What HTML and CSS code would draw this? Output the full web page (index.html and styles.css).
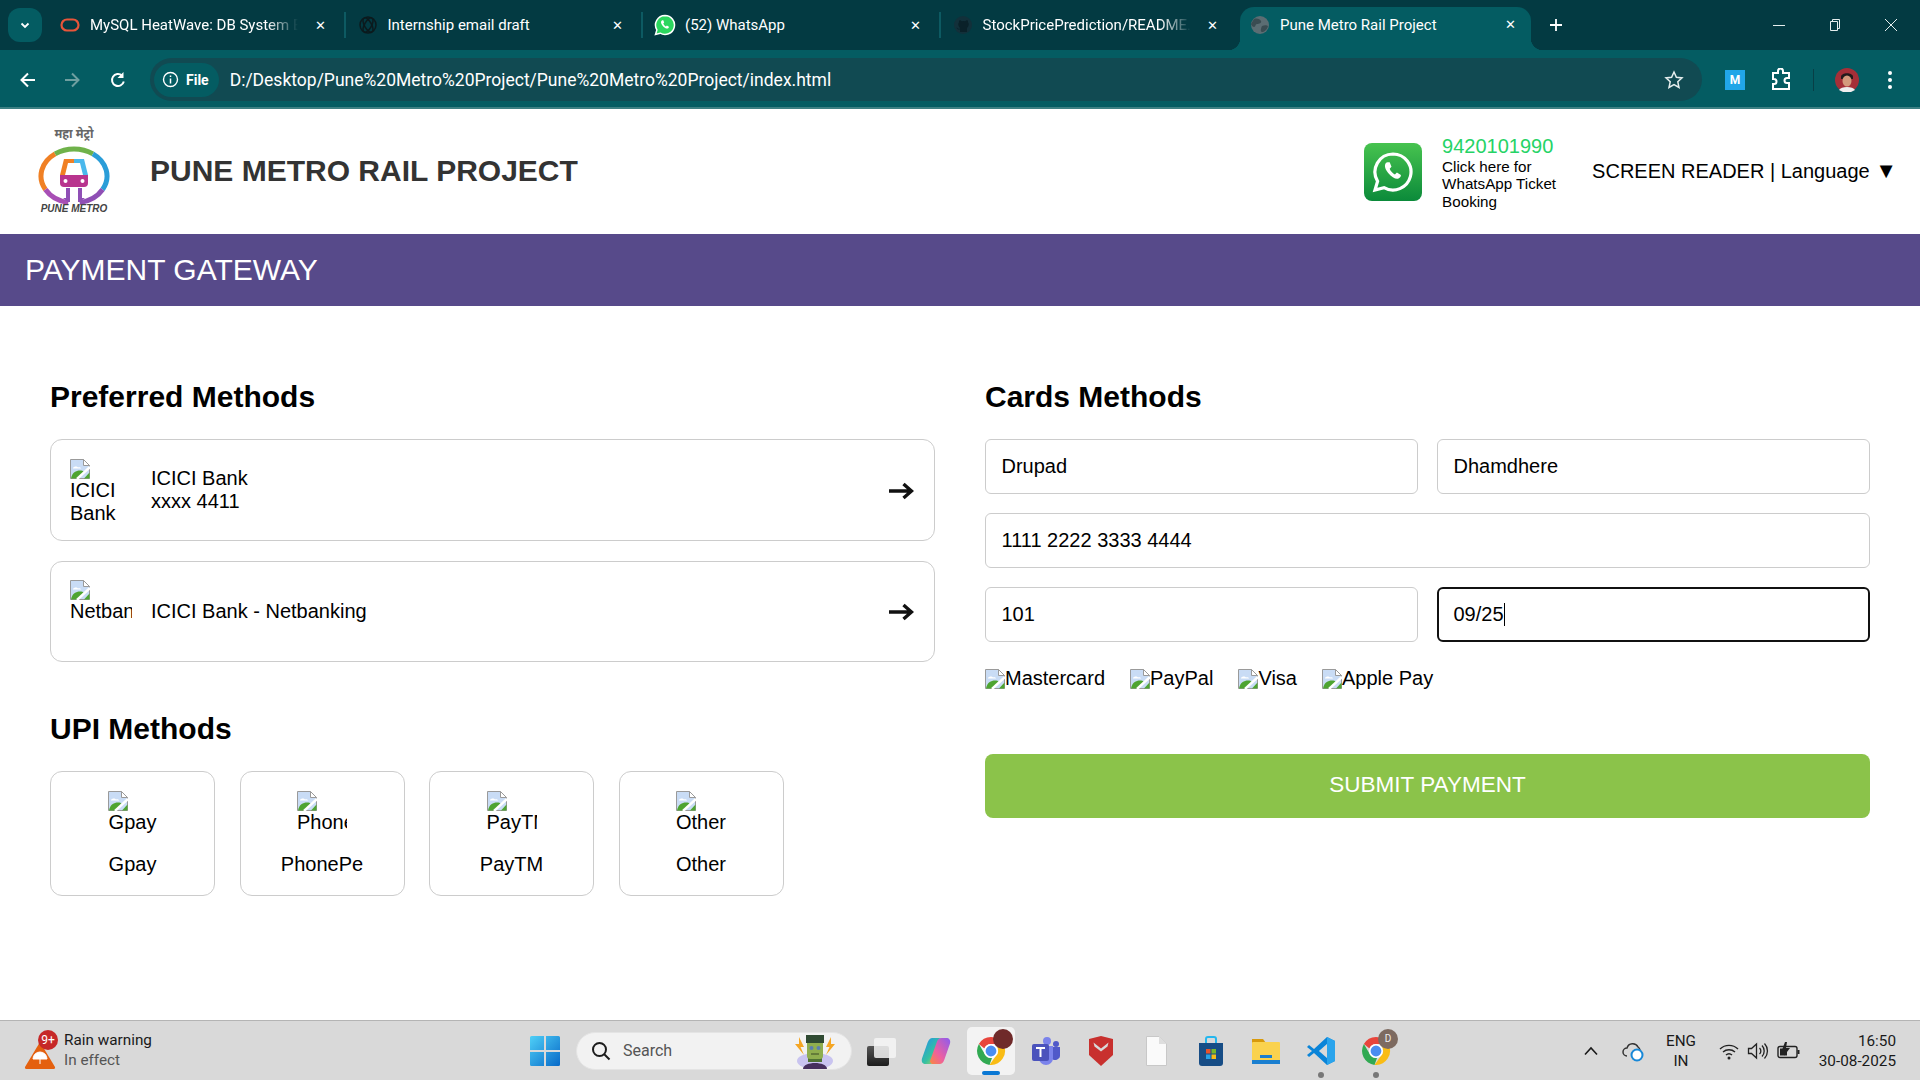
FILE: index.html
```html
<!DOCTYPE html>
<html lang="en">
<head>
<meta charset="utf-8">
<title>Pune Metro Rail Project</title>
<link rel="stylesheet" href="styles.css">
</head>
<body>
<svg class="defs" width="0" height="0" aria-hidden="true">
  <defs>
    <symbol id="broken" viewBox="0 0 20 20">
      <path d="M.5.5H13.5L19.5 6.5V19.5H.5Z" fill="#c9dcf5" stroke="#9a9a9a"/>
      <path d="M13.5.5V6.5H19.5Z" fill="#fff" stroke="#9a9a9a"/>
      <path d="M3 9c1-2 4-2 5-.5 1-.5 3 0 3 1H3Z" fill="#fff"/>
      <path d="M1 19.5c1-6 5-8 9-8 2 0 3 .5 4 1l-6 7Z" fill="#4ea431"/>
      <path d="M19.5 13.5V19.5H14Z" fill="#4ea431"/>
      <path d="M7 20 20 8" stroke="#fff" stroke-width="2.4"/>
    </symbol>
    <symbol id="chrome" viewBox="0 0 32 32">
      <path d="M16 2a14 14 0 0 1 12.1 7H16a7 7 0 0 0-6.6 4.6L3.9 9A14 14 0 0 1 16 2Z" fill="#e8453c"/>
      <path d="M28.1 9A14 14 0 0 1 14.500 29.900L20.600 21.200A7 7 0 0 0 22 12L28.100 9Z" fill="#f9bc15"/>
      <path d="M3.900 9L10 19.500A7 7 0 0 0 17 23L14.500 29.900A14 14 0 0 1 3.900 9Z" fill="#31a952"/>
      <circle cx="16" cy="16" r="6.200" fill="#4a8df0" stroke="#fff" stroke-width="1.600"/>
    </symbol>
    <symbol id="go" viewBox="0 0 26 18">
      <path d="M1 9H23M15.500 2 23.500 9 15.500 16" fill="none" stroke="#111" stroke-width="3.400"/>
    </symbol>
  </defs>
</svg>

<div class="browser-tabs">
  <div class="tab-search"><svg width="12" height="12" viewBox="0 0 12 12"><path d="M2.500 4.500 6 8l3.500-3.500" fill="none" stroke="#fff" stroke-width="1.800"/></svg></div>
  <div class="tab">
    <svg class="favicon" width="20" height="20" viewBox="0 0 20 20"><rect x="1.500" y="4.500" width="17" height="11" rx="5.500" fill="none" stroke="#e8553a" stroke-width="2.200"/></svg>
    <span class="tab-title fade">MySQL HeatWave: DB System E</span><span class="tab-x">✕</span>
  </div>
  <div class="tab-sep"></div>
  <div class="tab">
    <svg class="favicon" width="20" height="20" viewBox="0 0 20 20"><g fill="none" stroke="#0c1a1d" stroke-width="1.500"><circle cx="10" cy="10" r="8"/><ellipse cx="10" cy="10" rx="8" ry="3.500" transform="rotate(60 10 10)"/><ellipse cx="10" cy="10" rx="8" ry="3.500" transform="rotate(-60 10 10)"/></g></svg>
    <span class="tab-title">Internship email draft</span><span class="tab-x">✕</span>
  </div>
  <div class="tab-sep"></div>
  <div class="tab">
    <svg class="favicon favicon-wide" width="22" height="22" viewBox="0 0 22 22"><path d="M11 1.500a9.500 9.500 0 0 0-8.100 14.400L1.500 20.500l4.700-1.300A9.500 9.500 0 1 0 11 1.500Z" fill="#2bd65e" stroke="#fff" stroke-width="1.500"/><path d="M7.800 6.500c-1.300 1-1 3 .8 5.200 1.800 2.200 3.900 3.200 5.100 2.700.8-.3 1.300-1.200 1.200-1.700l-2-1.200-1 .9c-1-.4-2.300-1.900-2.600-2.900l.9-1-.9-2.200c-.5-.1-1.100-.1-1.500.2Z" fill="#fff"/></svg>
    <span class="tab-title">(52) WhatsApp</span><span class="tab-x">✕</span>
  </div>
  <div class="tab-sep"></div>
  <div class="tab">
    <svg class="favicon" width="20" height="20" viewBox="0 0 20 20"><circle cx="10" cy="10" r="9" fill="#12303a"/><path d="M7 17v-2.500c-2 .3-3-.6-3.500-2 1.500.8 2 1.600 3.500 1.200 0-1-.5-1.500-1-2 -1-1.500-1-3.500 0-4.500 0-1 0-1.500.5-2 1 0 1.800.5 2.300 1a6 6 0 0 1 3.400 0c.5-.5 1.300-1 2.300-1 .5.500.5 1 .5 2 1 1 1 3 0 4.500-.5.500-1 1-1 2V17Z" fill="#0a2129"/></svg>
    <span class="tab-title fade">StockPricePrediction/README.md</span><span class="tab-x">✕</span>
  </div>
  <div class="tab tab-active">
    <svg class="favicon" width="20" height="20" viewBox="0 0 20 20"><circle cx="10" cy="10" r="9" fill="#5b6d73"/><path d="M4 4c3-1 6 0 7 2s-2 3-4 3 -1 3-3 3-3-3-3-3ZM12 11c2-1 5-1 6 0-1 4-4 6-6 6s-1-4 0-6Z" fill="#3a4c52"/></svg>
    <span class="tab-title">Pune Metro Rail Project</span><span class="tab-x">✕</span>
  </div>
  <div class="tab-plus">
    <svg width="14" height="14" viewBox="0 0 14 14"><path d="M7 1v12M1 7h12" stroke="#fff" stroke-width="1.800"/></svg>
  </div>
  <div class="win-controls">
    <svg width="14" height="14" viewBox="0 0 14 14"><path d="M1 7.500h12" stroke="#e5eeee"/></svg>
    <svg width="14" height="14" viewBox="0 0 14 14"><path d="M2.500 3.500h7v9h-7ZM4.500 3.500V1.500h7v9h-2" fill="none" stroke="#e5eeee"/></svg>
    <svg width="14" height="14" viewBox="0 0 14 14"><path d="M1 1l12 12M13 1 1 13" stroke="#e5eeee"/></svg>
  </div>
</div>

<div class="browser-toolbar">
  <svg class="nav" width="20" height="20" viewBox="0 0 20 20"><path d="M17 10H4M10 3.500 3.500 10l6.500 6.500" fill="none" stroke="#fff" stroke-width="2"/></svg>
  <svg class="nav" width="20" height="20" viewBox="0 0 20 20"><path d="M3 10h13M10 3.500l6.500 6.500-6.500 6.500" fill="none" stroke="#6f9fa0" stroke-width="2"/></svg>
  <svg class="nav nav-reload" width="20" height="20" viewBox="0 0 20 20"><path d="M15.800 11.500A6 6 0 1 1 14 5.500" fill="none" stroke="#fff" stroke-width="2"/><path d="M15.500 2v6h-6Z" fill="#fff"/></svg>
  <div class="omnibox">
    <div class="chip">
      <svg width="17" height="17" viewBox="0 0 17 17"><circle cx="8.500" cy="8.500" r="7" fill="none" stroke="#fff" stroke-width="1.400"/><path d="M8.500 7.500v5M8.500 4.500v1.500" stroke="#fff" stroke-width="1.500"/></svg>
      <span>File</span>
    </div>
    <span class="url">D:/Desktop/Pune%20Metro%20Project/Pune%20Metro%20Project/index.html</span>
    <svg class="star" width="20" height="20" viewBox="0 0 20 20"><path d="M10 2l2.400 5.300 5.600.6-4.200 3.900 1.200 5.700-5-2.900-5 2.900 1.200-5.700L2 7.900l5.600-.6Z" fill="none" stroke="#e6eeee" stroke-width="1.500"/></svg>
  </div>
  <div class="ext-m">M</div>
  <svg class="ext-puzzle" width="22" height="24" viewBox="0 0 22 24"><path d="M2 5h5V3a2.500 2.500 0 0 1 5 0v2h6v5h-2a2.500 2.500 0 0 0 0 5h2v6H2v-5h1a2.500 2.500 0 0 0 0-5H2Z" fill="none" stroke="#fff" stroke-width="2"/></svg>
  <div class="tool-sep"></div>
  <svg class="avatar" width="24" height="24" viewBox="0 0 24 24"><circle cx="12" cy="12" r="12" fill="#a52f38"/><path d="M6 9c0-5 12-5 12 0v2H6Z" fill="#221a1c"/><ellipse cx="12" cy="13" rx="4.500" ry="5.500" fill="#d49a7c"/><path d="M4 22c2-4 14-4 16 0l-4 2H8Z" fill="#f0eeee"/></svg>
  <svg class="menu" width="6" height="20" viewBox="0 0 6 20"><circle cx="3" cy="3" r="2" fill="#fff"/><circle cx="3" cy="10" r="2" fill="#fff"/><circle cx="3" cy="17" r="2" fill="#fff"/></svg>
</div>

<main class="page">
  <header class="site-header">
    <div class="logo">
      <span class="logo-hindi">महा मेट्रो</span>
      <svg class="logo-mark" width="72" height="60" viewBox="0 0 72 60">
        <g fill="none" stroke-width="5">
          <path d="M7.400 43.500A33 27 0 0 1 17.100 7.900" stroke="#f08024"/>
          <path d="M17.100 7.900A33 27 0 0 1 54.900 7.900" stroke="#6fb24a"/>
          <path d="M54.900 7.900A33 27 0 0 1 64.600 43.500" stroke="#2a9dd8"/>
          <path d="M64.600 43.500A33 27 0 0 1 41.700 56.600" stroke="#8f4fb5"/>
          <path d="M30.300 56.600A33 27 0 0 1 7.400 43.500" stroke="#a84fb5"/>
        </g>
        <path d="M26 13h10v4h-6l-3 12h-5Z" fill="#f08024"/>
        <path d="M36 13h10l4 16h-5l-3-12h-6Z" fill="#4ab8ec"/>
        <path d="M22 29h28v8a4 4 0 0 1-4 4H26a4 4 0 0 1-4-4Z" fill="#b8348e"/>
        <circle cx="27.500" cy="35" r="2" fill="#fff"/><circle cx="44.500" cy="35" r="2" fill="#fff"/>
        <path d="M28 42h4v14h-2l-5-4h3ZM40 42h4v10h3l-5 4h-2Z" fill="#8f4fb5"/>
      </svg>
      <span class="logo-en">PUNE METRO</span>
    </div>
    <h1 class="site-title">PUNE METRO RAIL PROJECT</h1>
    <div class="wa-icon">
      <svg width="44" height="44" viewBox="0 0 44 44"><path d="M22 4a18 18 0 0 0-15.400 27.300L4 40l9-2.400A18 18 0 1 0 22 4Z" fill="none" stroke="#fff" stroke-width="3.200"/><path d="M15.500 12.500c-2.500 2-2 6 1.700 10.500 3.700 4.500 7.800 6.500 10.300 5.500 1.600-.7 2.600-2.400 2.400-3.500l-4-2.400-2 1.900c-2-.8-4.600-3.800-5.200-5.800l1.800-2-1.800-4.400c-1-.2-2.200-.2-3 .2Z" fill="#fff"/></svg>
    </div>
    <div class="wa-text">
      <div class="wa-number">9420101990</div>
      <div class="wa-desc">Click here for<br>WhatsApp Ticket<br>Booking</div>
    </div>
    <div class="reader">SCREEN READER | Language <span class="reader-arrow">▼</span></div>
  </header>

  <div class="banner">PAYMENT GATEWAY</div>

  <div class="pay-grid">
    <section class="pay-col">
      <h2 class="section-title">Preferred Methods</h2>
      <div class="method-card">
        <div class="alt-img"><svg class="broken"><use href="#broken"/></svg>ICICI Bank</div>
        <div class="method-text">ICICI Bank<br>xxxx 4411</div>
        <svg class="arrow"><use href="#go"/></svg>
      </div>
      <div class="method-card">
        <div class="alt-img nowrap"><svg class="broken"><use href="#broken"/></svg>Netbanking</div>
        <div class="method-text">ICICI Bank - Netbanking</div>
        <svg class="arrow"><use href="#go"/></svg>
      </div>
      <h2 class="section-title upi-title">UPI Methods</h2>
      <div class="upi-row">
        <div class="upi-card"><div class="upi-img"><svg class="broken"><use href="#broken"/></svg>Gpay</div><div>Gpay</div></div>
        <div class="upi-card"><div class="upi-img"><svg class="broken"><use href="#broken"/></svg>PhonePe</div><div>PhonePe</div></div>
        <div class="upi-card"><div class="upi-img"><svg class="broken"><use href="#broken"/></svg>PayTM</div><div>PayTM</div></div>
        <div class="upi-card"><div class="upi-img"><svg class="broken"><use href="#broken"/></svg>Other</div><div>Other</div></div>
      </div>
    </section>
    <section class="pay-col">
      <h2 class="section-title">Cards Methods</h2>
      <div class="form-grid">
        <div class="field">Drupad</div>
        <div class="field">Dhamdhere</div>
        <div class="field field-wide">1111 2222 3333 4444</div>
        <div class="field">101</div>
        <div class="field field-focus">09/25<span class="caret"></span></div>
      </div>
      <div class="brands">
        <span class="brand"><svg class="broken"><use href="#broken"/></svg>Mastercard</span>
        <span class="brand"><svg class="broken"><use href="#broken"/></svg>PayPal</span>
        <span class="brand"><svg class="broken"><use href="#broken"/></svg>Visa</span>
        <span class="brand"><svg class="broken"><use href="#broken"/></svg>Apple Pay</span>
      </div>
      <div class="submit">SUBMIT PAYMENT</div>
    </section>
  </div>
</main>

<footer class="taskbar">
  <div class="tb-left">
    <div class="weather">
      <svg width="32" height="30" viewBox="0 0 32 30"><path d="M16 2 31 27a1.500 1.500 0 0 1-1 2H2a1.500 1.500 0 0 1-1-2Z" fill="#e4600f"/><path d="M9 19a7 7 0 0 1 14 0ZM16 19v5" fill="#fff" stroke="#fff"/></svg>
      <span class="weather-badge">9+</span>
    </div>
    <div class="weather-text"><div>Rain warning</div><div class="muted">In effect</div></div>
  </div>
  <div class="tb-center">
    <svg class="winlogo" width="30" height="30" viewBox="0 0 30 30"><defs><linearGradient id="wg" x1="0" y1="0" x2="1" y2="1"><stop offset="0" stop-color="#4fd0f7"/><stop offset="1" stop-color="#0769c8"/></linearGradient></defs><path d="M0 1.500A1.500 1.500 0 0 1 1.500 0H14V14H0ZM16 0H28.500A1.500 1.500 0 0 1 30 1.500V14H16ZM0 16H14V30H1.500A1.500 1.500 0 0 1 0 28.500ZM16 16H30V28.500A1.500 1.500 0 0 1 28.500 30H16Z" fill="url(#wg)"/></svg>
    <div class="tb-search">
      <svg width="20" height="20" viewBox="0 0 20 20"><circle cx="8.500" cy="8.500" r="6.500" fill="none" stroke="#1c1c1c" stroke-width="2"/><path d="M13 13l5.500 5.500" stroke="#1c1c1c" stroke-width="2"/></svg>
      <span class="search-text">Search</span>
      <svg class="franken" width="50" height="36" viewBox="0 0 50 36"><ellipse cx="25" cy="28" rx="18" ry="8" fill="#c9c4f0"/><path d="M9 4l5 10-3.500 0 3.500 8-9-11h4ZM41 4l-5 10 3.500 0-3.500 8 9-11h-4Z" fill="#f5a623"/><path d="M13 36c0-8 24-8 24 0Z" fill="#46305e"/><rect x="18" y="23" width="14" height="6" fill="#4e7233"/><rect x="17" y="6" width="16" height="20" rx="3" fill="#8fae4e"/><rect x="16" y="2" width="18" height="8" fill="#2f4a32"/><circle cx="21.500" cy="15" r="2" fill="#5a7fb0"/><circle cx="28.500" cy="15" r="2" fill="#5a7fb0"/><path d="M21 21h8" stroke="#3a4a24"/></svg>
    </div>
    <div class="tb-icons">
      <div class="tb-app"><svg width="32" height="30" viewBox="0 0 32 30"><defs><linearGradient id="tv" x1="0" y1="0" x2="0" y2="1"><stop offset="0" stop-color="#555"/><stop offset="1" stop-color="#1d1d1d"/></linearGradient></defs><rect x="2" y="10" width="22" height="20" rx="2" fill="url(#tv)"/><rect x="9" y="2" width="22" height="20" rx="2" fill="#f4f4f4" fill-opacity=".85"/></svg></div>
      <div class="tb-app"><svg width="30" height="28" viewBox="0 0 32 30"><defs><linearGradient id="cp1" x1="0" y1="0" x2="1" y2="1"><stop offset="0" stop-color="#1f8ef0"/><stop offset=".55" stop-color="#35c1a0"/><stop offset="1" stop-color="#f9d23c"/></linearGradient><linearGradient id="cp2" x1="1" y1="0" x2="0" y2="1"><stop offset="0" stop-color="#8a5cf0"/><stop offset=".6" stop-color="#ee5fa0"/><stop offset="1" stop-color="#f98a3c"/></linearGradient></defs><path d="M12 1h7c2 0 3 1 3.500 3L15 25c-1 3-3 4-5 4H5c-3 0-5-2-4-6L7 6c1-3 3-5 5-5Z" fill="url(#cp1)"/><path d="M20 29h-7c-2 0-3-1-3.500-3L17 5c1-3 3-4 5-4h5c3 0 5 2 4 6l-6 17c-1 3-3 5-5 5Z" fill="url(#cp2)"/></svg></div>
      <div class="tb-app tb-active">
        <svg width="32" height="32"><use href="#chrome"/></svg>
        <span class="prof-badge"></span><span class="active-bar"></span>
      </div>
      <div class="tb-app"><svg width="32" height="30" viewBox="0 0 32 30"><circle cx="17" cy="5" r="4" fill="#7b83eb"/><circle cx="26" cy="8" r="3" fill="#5059c9"/><path d="M19 11h11v9a5 5 0 0 1-8 3Z" fill="#5059c9"/><path d="M9 10h14v12a7 7 0 0 1-14 0Z" fill="#7b83eb"/><rect x="2" y="8" width="17" height="17" rx="2" fill="#4b53bc"/><path d="M6 12h9M10.500 12v9" stroke="#fff" stroke-width="2"/></svg></div>
      <div class="tb-app"><svg width="26" height="30" viewBox="0 0 26 30"><path d="M1 3l12-3 12 3v16l-12 11L1 19Z" fill="#c8302e"/><path d="M5.500 6.500l7.500 6 7.500-6-1 4-6.500 5-6.500-5Z" fill="#d9d9d9"/></svg></div>
      <div class="tb-app"><svg width="24" height="30" viewBox="0 0 24 30"><path d="M2.500.5H15L22.500 8V29.500H2.500Z" fill="#fafafa" stroke="#c8c8c8"/><path d="M15 .5V8H22.500Z" fill="#dedede"/></svg></div>
      <div class="tb-app"><svg width="26" height="30" viewBox="0 0 26 30"><path d="M8 7V3a2 2 0 0 1 2-2h6a2 2 0 0 1 2 2v4" fill="none" stroke="#25b7ee" stroke-width="2"/><path d="M1 7h24v20a3 3 0 0 1-3 3H4a3 3 0 0 1-3-3Z" fill="#174d86"/><rect x="8" y="13" width="4.500" height="4.500" fill="#e8532c"/><rect x="13.500" y="13" width="4.500" height="4.500" fill="#77b82a"/><rect x="8" y="18.500" width="4.500" height="4.500" fill="#25a3e8"/><rect x="13.500" y="18.500" width="4.500" height="4.500" fill="#f5bb18"/></svg></div>
      <div class="tb-app"><svg width="30" height="28" viewBox="0 0 30 28"><path d="M1 2h11l3 4H1Z" fill="#d89a0c"/><rect x="1" y="5" width="28" height="22" rx="1" fill="#fad24e"/><rect x="9" y="18" width="12" height="3" fill="#1a7fd0"/><rect x="1" y="23" width="28" height="4" fill="#1a7fd0"/></svg></div>
      <div class="tb-app"><svg width="30" height="30" viewBox="0 0 30 30"><path d="M21 1l8 4v20l-8 4L8 17l-5 4-2-2 5-4-5-4 2-2 5 4Z" fill="#0a84d8"/><path d="M21 1v28l8-4V5ZM21 8l-8 7 8 7Z" fill="#2aa4ec"/><path d="M21 8l-8 7 8 7Z" fill="#d9d9d9"/></svg><span class="run-dot"></span></div>
      <div class="tb-app">
        <svg width="32" height="32"><use href="#chrome"/></svg>
        <span class="prof-badge prof-d">D</span><span class="run-dot"></span>
      </div>
    </div>
  </div>
  <div class="tb-right">
    <svg width="16" height="10" viewBox="0 0 16 10"><path d="M2 8.500 8 2l6 6.500" fill="none" stroke="#1a1a1a" stroke-width="1.600"/></svg>
    <svg width="24" height="22" viewBox="0 0 24 22"><path d="M6 16a4 4 0 0 1 0-8 6 6 0 0 1 11-1 4.500 4.500 0 0 1 1 6" fill="none" stroke="#333" stroke-width="1.500"/><circle cx="16" cy="15" r="5.500" fill="#fff" stroke="#1788d8" stroke-width="2"/></svg>
    <div class="lang"><div>ENG</div><div>IN</div></div>
    <div class="sys-icons">
      <svg width="20" height="18" viewBox="0 0 20 18"><path d="M1 7a13 13 0 0 1 18 0M4 10a9 9 0 0 1 12 0M7 13a4.500 4.500 0 0 1 6 0" fill="none" stroke="#222" stroke-width="1.400"/><circle cx="10" cy="16" r="1.500" fill="#222"/></svg>
      <svg width="22" height="18" viewBox="0 0 22 18"><path d="M1.500 6.500h3l5-4.500v14l-5-4.500h-3Z" fill="none" stroke="#222" stroke-width="1.300"/><path d="M12.500 6a4 4 0 0 1 0 6M15 3.500a8 8 0 0 1 0 11M17.500 1.500a11 11 0 0 1 0 15" fill="none" stroke="#222" stroke-width="1.300"/></svg>
      <svg width="24" height="18" viewBox="0 0 24 18"><rect x="1" y="4.500" width="19" height="11" rx="2" fill="none" stroke="#222" stroke-width="1.400"/><rect x="3" y="6.500" width="7" height="7" fill="#222"/><path d="M21.500 8v4" stroke="#222" stroke-width="2"/><path d="M8 0 5 8h4l-2 6 6-8H9l1-6Z" fill="#222"/></svg>
    </div>
    <div class="clock"><div>16:50</div><div>30-08-2025</div></div>
  </div>
</footer>
</body>
</html>
```

FILE: styles.css
```css
* { box-sizing: border-box; }
html, body { margin: 0; height: 100%; }
body {
  display: flex;
  flex-direction: column;
  height: 1080px;
  overflow: hidden;
  font-family: "Liberation Sans", Arial, sans-serif;
  font-size: 20px;
  color: #000;
  background: #fff;
}
.defs { position: absolute; }

/* browser chrome */
.browser-tabs {
  display: flex;
  align-items: flex-end;
  height: 50px;
  flex: none;
  background: #033a42;
  color: #fff;
  font-family: Roboto, "Liberation Sans", sans-serif;
  font-size: 15px;
}
.tab-search {
  width: 34px;
  height: 34px;
  margin: 0 6px 8px 8px;
  flex: none;
  border-radius: 12px;
  background: #045c62;
  display: flex;
  align-items: center;
  justify-content: center;
}
.tab {
  width: 295.500px;
  height: 42px;
  display: flex;
  align-items: center;
  padding: 0 15.500px 8px 12px;
  flex: none;
}
.tab-sep {
  width: 2px;
  height: 26px;
  margin-bottom: 12px;
  background: #0d5a62;
  flex: none;
}
.favicon { flex: none; margin-right: 10px; }
.favicon-wide { margin-left: -1px; margin-right: 9px; }
.tab-title { flex: 1; white-space: nowrap; overflow: hidden; min-width: 0; }
.fade {
  -webkit-mask-image: linear-gradient(90deg, #000 85%, transparent);
  mask-image: linear-gradient(90deg, #000 85%, transparent);
}
.tab-x { flex: none; width: 16px; font-size: 13px; text-align: center; margin-left: 14px; }
.tab-active {
  position: relative;
  width: 291px;
  height: 43px;
  margin-left: 4px;
  padding: 0 13px 8px 10px;
  background: #045c62;
  border-radius: 14px 14px 0 0;
}
.tab-active::before,
.tab-active::after {
  content: "";
  position: absolute;
  bottom: 0;
  width: 12px;
  height: 12px;
}
.tab-active::before { left: -12px; background: radial-gradient(circle at 0 0, transparent 12px, #045c62 12.500px); }
.tab-active::after { right: -12px; background: radial-gradient(circle at 100% 0, transparent 12px, #045c62 12.500px); }
.tab-plus {
  width: 50px;
  height: 42px;
  flex: none;
  display: flex;
  align-items: center;
  justify-content: center;
  padding-bottom: 8px;
}
.win-controls {
  margin-left: auto;
  display: flex;
  gap: 42px;
  align-self: center;
  padding-right: 22px;
}
.browser-toolbar {
  display: flex;
  align-items: center;
  height: 59px;
  flex: none;
  padding: 2px 12px 0 18px;
  background: #045c62;
  border-bottom: 2px solid #3d8083;
  color: #fff;
  font-family: Roboto, "Liberation Sans", sans-serif;
}
.nav { flex: none; margin-right: 24px; }
.nav-reload { margin-left: 2px; margin-right: 30px; }
.omnibox {
  flex: none;
  width: 1552px;
  height: 43px;
  margin-left: -8px;
  padding: 0 14px 0 4px;
  border-radius: 22px;
  background: #114a52;
  display: flex;
  align-items: center;
}
.chip {
  display: flex;
  align-items: center;
  gap: 7px;
  height: 34px;
  padding: 0 10px 0 8px;
  border-radius: 17px;
  background: #045c62;
  font-size: 14px;
  font-weight: 700;
}
.url { margin-left: 11px; font-size: 17.500px; white-space: nowrap; flex: 1; }
.star { margin-right: 4px; }
.ext-m {
  width: 20px;
  height: 20px;
  margin-left: 23px;
  background: #21a6e8;
  color: #fff;
  font-size: 12px;
  font-weight: 700;
  text-align: center;
  line-height: 20px;
}
.ext-puzzle { margin-left: 26px; }
.tool-sep { width: 1px; height: 22px; margin: 0 21px 0 20px; background: #083f46; }
.menu { margin-left: 28px; }

/* page */
.page { flex: 1; min-height: 0; display: flex; flex-direction: column; }
.site-header {
  height: 125px;
  flex: none;
  display: flex;
  align-items: center;
  padding: 0 23px 0 38px;
  background: #fff;
}
.logo {
  width: 72px;
  height: 88px;
  flex: none;
  display: flex;
  flex-direction: column;
  align-items: center;
  margin-top: -2px;
  font-size: 10px;
}
.logo-hindi { font-family: "Noto Sans", "Liberation Sans", sans-serif; line-height: 14px; font-size: 12px; color: #666; font-weight: 700; font-style: italic; }
.logo-mark { flex: none; margin-top: 5px; }
.logo-en { font-style: italic; font-weight: 700; line-height: 12px; margin-top: -3px; color: #444; white-space: nowrap; }
.site-title {
  margin: -2px 0 0 40px;
  font-size: 30px;
  font-weight: 700;
  color: #333;
  white-space: nowrap;
}
.wa-icon {
  margin-left: auto;
  width: 58px;
  height: 58px;
  flex: none;
  border-radius: 8px;
  background: linear-gradient(#47c34f, #0b8a3a);
  display: flex;
  align-items: center;
  justify-content: center;
}
.wa-text { width: 150px; margin-left: 20px; padding-top: 2px; flex: none; }
.wa-number { color: #25d366; font-size: 20px; line-height: 23px; }
.wa-desc { font-size: 15.200px; line-height: 17.500px; }
.reader { white-space: nowrap; }
.reader-arrow { font-size: 22px; line-height: 20px; }
.banner {
  height: 72px;
  flex: none;
  padding-left: 25px;
  display: flex;
  align-items: center;
  background: #574a8a;
  color: #fff;
  font-size: 30px;
}
.pay-grid {
  display: grid;
  grid-template-columns: 885px 885px;
  gap: 50px;
  padding: 74px 50px 0;
}
.pay-col { min-width: 0; }
.section-title {
  margin: 0 0 25px;
  font-size: 30px;
  line-height: 34px;
  font-weight: 700;
}
.upi-title { margin-top: 50px; }
.method-card {
  height: 101.500px;
  margin-bottom: 20px;
  padding: 0 20px 0 19px;
  display: flex;
  align-items: center;
  border: 1px solid #ccc;
  border-radius: 12px;
}
.alt-img {
  width: 61.500px;
  height: 64px;
  padding-top: 1px;
  flex: none;
  overflow: hidden;
  line-height: 23px;
}
.nowrap { white-space: nowrap; }
.broken { display: block; width: 20px; height: 20px; flex: none; }
.method-text { margin-left: 19.500px; line-height: 23px; flex: 1; }
.arrow { flex: none; width: 26px; height: 18px; margin-top: 2px; }
.upi-row { display: flex; gap: 24.500px; }
.upi-card {
  width: 165px;
  height: 125px;
  padding-top: 19px;
  display: flex;
  flex-direction: column;
  align-items: center;
  border: 1px solid #ccc;
  border-radius: 12px;
  line-height: 23px;
}
.upi-img { width: 50px; height: 50px; margin-bottom: 12px; overflow: hidden; white-space: nowrap; text-align: center; }
.form-grid {
  display: grid;
  grid-template-columns: 1fr 1fr;
  gap: 19px;
}
.field {
  height: 55px;
  padding: 0 15.500px;
  display: flex;
  align-items: center;
  border: 1px solid #ccc;
  border-radius: 6px;
}
.field-wide { grid-column: 1 / 3; }
.field-focus { border: 2px solid #111; padding: 0 14.500px; }
.caret { width: 1px; height: 23px; background: #000; }
.brands { display: flex; gap: 25px; margin-top: 25px; height: 23px; line-height: 23px; }
.brand { display: flex; align-items: center; }
.submit {
  height: 64px;
  margin-top: 64px;
  padding-bottom: 2px;
  border-radius: 8px;
  background: #8bc34a;
  color: #fff;
  font-size: 22.500px;
  display: flex;
  align-items: center;
  justify-content: center;
}

/* taskbar */
.taskbar {
  height: 60px;
  flex: none;
  display: flex;
  align-items: center;
  border-top: 1px solid #b4b4b4;
  background: #d9d9d9;
  font-family: Roboto, "Liberation Sans", sans-serif;
  font-size: 15.300px;
  color: #1a1a1a;
}
.tb-left { width: 530px; flex: none; display: flex; align-items: center; padding-left: 24px; }
.weather { position: relative; width: 32px; height: 30px; margin-top: 8px; }
.weather-badge {
  position: absolute;
  top: -10px;
  left: 14px;
  width: 20px;
  height: 20px;
  border-radius: 50%;
  background: #c62828;
  color: #fff;
  font-size: 12px;
  line-height: 20px;
  text-align: center;
}
.weather-text { margin: -2px 0 0 8px; line-height: 20px; }
.muted { color: #555; }
.tb-center { display: flex; align-items: center; flex: none; }
.winlogo { flex: none; }
.tb-search {
  width: 276px;
  height: 38px;
  margin-left: 16px;
  padding: 0 11px 0 14px;
  display: flex;
  align-items: center;
  border-radius: 19px;
  background: #f2f2f2;
  border: 1px solid #e4e4e4;
}
.search-text { margin-left: 12px; font-size: 16px; color: #555; flex: 1; }
.tb-icons { display: flex; margin-left: 5px; }
.tb-app {
  position: relative;
  width: 48px;
  height: 48px;
  margin-right: 7px;
  display: flex;
  align-items: center;
  justify-content: center;
}
.tb-active { background: #f3f3f3; border-radius: 5px; }
.active-bar {
  position: absolute;
  left: 15px;
  bottom: 0;
  width: 18px;
  height: 4px;
  border-radius: 2px;
  background: #0a78d4;
}
.run-dot {
  position: absolute;
  left: 21px;
  bottom: -3px;
  width: 6px;
  height: 6px;
  border-radius: 50%;
  background: #777;
}
.prof-badge {
  position: absolute;
  top: 2px;
  right: 2px;
  width: 20px;
  height: 20px;
  border-radius: 50%;
  background: #6f2a2a;
  color: #eee;
  font-size: 10px;
  line-height: 20px;
  text-align: center;
}
.prof-d { background: #7d6a60; }
.tb-right {
  margin-left: auto;
  display: flex;
  align-items: center;
  padding-right: 24px;
}
.tb-right > svg:first-child { margin-right: 22px; }
.lang { width: 40px; margin-left: 16px; text-align: center; line-height: 20px; }
.sys-icons { display: flex; align-items: center; gap: 8px; margin-left: 18px; }
.clock { width: 93px; text-align: right; line-height: 20px; margin-left: 2px; }
```
